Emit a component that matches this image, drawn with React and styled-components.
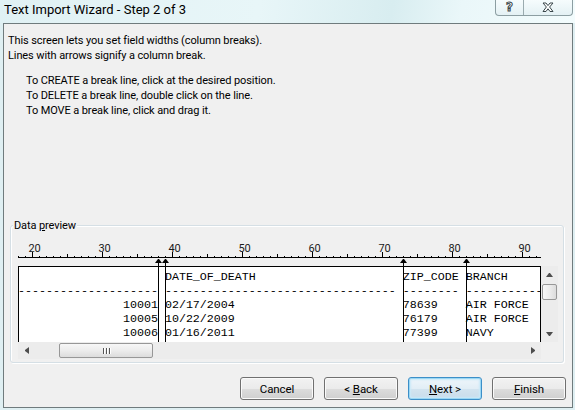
import styled, { createGlobalStyle } from "styled-components";

const UI_FONT = `Roboto, "Noto Sans", sans-serif`;
const MONO = `"Liberation Mono", "Courier New", monospace`;

// one character of the preview is 7px wide; the view is scrolled so col 18 sits at the pane's left edge
const CHAR = 7;
const FIRST_COL = 18;
const colX = (c) => (c - FIRST_COL) * CHAR;

const BREAKS = [38, 39, 73, 82];

const row = (id, date, zip, branch) =>
  id.padStart(38) + " " + date.padEnd(34) + zip.padEnd(9) + branch;

const LINES = [
  " ".repeat(39) + "DATE_OF_DEATH".padEnd(34) + "ZIP_CODE".padEnd(9) + "BRANCH",
  "-".repeat(38) + " " + "-".repeat(33) + " " + "-".repeat(8) + " " + "-".repeat(11),
  row("10001", "02/17/2004", "78639", "AIR FORCE"),
  row("10005", "10/22/2009", "76179", "AIR FORCE"),
  row("10006", "01/16/2011", "77399", "NAVY"),
].map((l) => l.slice(FIRST_COL));

const GlobalStyle = createGlobalStyle`
  html, body { margin: 0; padding: 0; }
  body {
    background: #e2f1f4;
    font-family: ${UI_FONT};
    font-size: 11px;
    letter-spacing: -0.1px;
    color: #000;
  }
`;

const Window = styled.div`
  width: 575px;
  height: 410px;
  display: flex;
  flex-direction: column;
  overflow: hidden;
  background: #dfeff2;
`;

const TitleBar = styled.div`
  height: 23px;
  flex-shrink: 0;
  display: flex;
  justify-content: space-between;
  align-items: flex-start;
  padding-left: 4px;
  background: linear-gradient(100deg, #e0f1f4 0%, #e8f6f8 45%, #d8edf0 68%, #eaf7f9 80%, #f3fcfd 100%);
`;

const Title = styled.div`
  line-height: 20px;
  font-size: 13px;
  letter-spacing: 0;
`;

const CaptionGroup = styled.div`
  display: flex;
  margin-right: 2px;
  height: 15px;
  border: 1px solid #8c9ea2;
  border-top: none;
  border-radius: 0 0 4px 4px;
  overflow: hidden;
  background: linear-gradient(180deg, #f6fcfd 0%, #e4f1f4 100%);
`;

const CaptionButton = styled.div`
  width: ${(p) => p.$w}px;
  display: flex;
  align-items: center;
  justify-content: center;
  & + & { border-left: 1px solid #9aabaf; }
`;

const HelpGlyph = styled.span`
  font-family: "DejaVu Sans", sans-serif;
  font-weight: bold;
  font-size: 12px;
  line-height: 12px;
  margin-top: -2px;
  color: #fff;
  -webkit-text-stroke: 1px #3a474b;
`;

const Client = styled.div`
  flex: 1;
  margin: 0 2px 2px 3px;
  border: 1px solid #6f7b7d;
  background: #f0f0f0;
  display: flex;
  flex-direction: column;
`;

const Intro = styled.div`
  height: 201px;
  padding: 9px 0 0 4px;
  box-sizing: border-box;
`;

const Para = styled.p`
  margin: 0;
  line-height: 15px;
  padding-left: ${(p) => (p.$indent ? 18 : 0)}px;
  & + & { margin-top: 10px; }
`;

const GroupBox = styled.div`
  position: relative;
  height: 138px;
  box-sizing: border-box;
  margin: 0 8px 0 6px;
  padding: 0 5px 0 7px;
  border: 1px solid #d5dfe5;
  border-radius: 3px;
  box-shadow: inset 1px 1px 0 #fff, 1px 1px 0 #fff;
`;

const Legend = styled.span`
  position: absolute;
  left: 2px;
  top: -8px;
  padding: 0 1px;
  line-height: 15px;
  background: #f0f0f0;
`;

const RulerSvg = styled.svg`
  display: block;
  width: 523px;
  height: 40px;
`;

const PreviewGrid = styled.div`
  display: grid;
  grid-template-columns: 523px 17px;
  grid-template-rows: 76px 17px;
`;

const Pane = styled.div`
  border: 1px solid #000;
  border-bottom: none;
  background: #fff;
  overflow: hidden;
  padding-top: 3px;
`;

const DataLine = styled.div`
  margin-left: -1px;
  white-space: pre;
  font-family: ${MONO};
  font-size: 11.66px;
  letter-spacing: 0;
  line-height: 14px;
  color: #000;
`;

const Track = styled.div`
  background: #ececec;
  display: flex;
  flex-direction: ${(p) => (p.$vertical ? "column" : "row")};
`;

const ArrowCell = styled.div`
  flex: 0 0 17px;
  display: flex;
  align-items: center;
  justify-content: center;
`;

const Spacer = styled.div`
  flex: 1;
`;

const ArrowUp = styled.div`
  width: 1px;
  border-left: 3px solid transparent;
  border-right: 3px solid transparent;
  border-${(p) => (p.$down ? "top" : "bottom")}: 4px solid #4d4d4d;
`;

const ArrowSide = styled.div`
  height: 1px;
  border-top: 3px solid transparent;
  border-bottom: 3px solid transparent;
  border-${(p) => (p.$right ? "left" : "right")}: 4px solid #4d4d4d;
`;

const VThumb = styled.div`
  margin: 1px 1px 0;
  height: 16px;
  box-sizing: border-box;
  border: 1px solid #979797;
  border-radius: 2px;
  background: linear-gradient(90deg, #f7f7f7 0%, #ececec 50%, #dcdcdc 100%);
`;

const HThumb = styled.div`
  margin: 1px 0 0 24px;
  width: 94px;
  height: 15px;
  box-sizing: border-box;
  border: 1px solid #979797;
  border-radius: 2px;
  background: linear-gradient(180deg, #f7f7f7 0%, #ececec 50%, #dcdcdc 100%);
  display: flex;
  align-items: center;
  justify-content: center;
  gap: 2px;
`;

const Grip = styled.div`
  width: 1px;
  height: 6px;
  background: #555;
  box-shadow: 1px 0 0 #fff;
`;

const Corner = styled.div`
  background: #f0f0f0;
`;

const Marker = styled.div`
  position: absolute;
  left: ${(p) => p.$x}px;
  top: 33px;
  width: 7px;
  height: 83px;
  display: flex;
  flex-direction: column;
  align-items: center;
`;

const MarkerHead = styled.div`
  width: 1px;
  border-left: 3px solid transparent;
  border-right: 3px solid transparent;
  border-bottom: 4px solid #000;
`;

const MarkerLine = styled.div`
  flex: 1;
  width: 1px;
  background: #000;
`;

const ButtonRow = styled.div`
  display: flex;
  justify-content: flex-end;
  gap: 10px;
  margin-top: 14px;
  padding-right: 6px;
`;

const Button = styled.button`
  width: 74px;
  height: 23px;
  padding: 0;
  font-family: ${UI_FONT};
  font-size: 11.5px;
  letter-spacing: -0.1px;
  color: #000;
  border-radius: 3px;
  border: 1px solid ${(p) => (p.$default ? "#3c8fc8" : "#707070")};
  background: ${(p) =>
    p.$default
      ? "linear-gradient(180deg, #eef6fb 0%, #e2eef6 50%, #d3e4ef 51%, #c8dcea 100%)"
      : "linear-gradient(180deg, #f2f2f2 0%, #ebebeb 50%, #dddddd 51%, #cfcfcf 100%)"};
  box-shadow: ${(p) =>
    p.$default ? "inset 0 0 0 1px #9ad7f4, inset 0 0 2px 2px #cbe9f8" : "inset 0 0 0 1px #fafafa"};
`;

function Ruler() {
  const ticks = [];
  const labels = [];
  for (let c = FIRST_COL; c <= 92; c++) {
    const x = colX(c);
    const h = c % 10 === 0 ? 5 : c % 5 === 0 ? 3 : 1;
    ticks.push(<rect key={c} x={x} y={31 - h} width="1" height={h} fill="#000" />);
    if (c % 10 === 0) {
      labels.push(
        <text
          key={"l" + c}
          x={x + 2.5}
          y="25.5"
          textAnchor="middle"
          fontFamily={UI_FONT}
          fontSize="11"
          fill="#1a1a1a"
        >
          {c}
        </text>
      );
    }
  }
  return (
    <RulerSvg viewBox="0 0 523 40">
      {labels}
      {ticks}
      <rect x="0" y="31" width="523" height="1" fill="#000" />
    </RulerSvg>
  );
}

function CloseGlyph() {
  return (
    <svg width="12" height="11" viewBox="0 0 12 11">
      <path
        d="M1 1h3l2 2.6L8 1h3L7.6 5 11 9.5H8L6 6.8 4 9.5H1L4.4 5z"
        fill="#fff"
        stroke="#3a474b"
        strokeWidth="1"
        strokeLinejoin="round"
      />
    </svg>
  );
}

export default function App() {
  return (
    <>
      <GlobalStyle />
      <Window>
        <TitleBar>
          <Title>Text Import Wizard - Step 2 of 3</Title>
          <CaptionGroup>
            <CaptionButton $w={27}>
              <HelpGlyph>?</HelpGlyph>
            </CaptionButton>
            <CaptionButton $w={48}>
              <CloseGlyph />
            </CaptionButton>
          </CaptionGroup>
        </TitleBar>

        <Client>
          <Intro>
            <Para>
              This screen lets you set field widths (column breaks).
              <br />
              Lines with arrows signify a column break.
            </Para>
            <Para $indent>
              To CREATE a break line, click at the desired position.
              <br />
              To DELETE a break line, double click on the line.
              <br />
              To MOVE a break line, click and drag it.
            </Para>
          </Intro>

          <GroupBox>
            <Legend>
              Data <u>p</u>review
            </Legend>
            <Ruler />
            <PreviewGrid>
              <Pane>
                {LINES.map((line, i) => (
                  <DataLine key={i}>{line}</DataLine>
                ))}
              </Pane>
              <Track $vertical>
                <ArrowCell>
                  <ArrowUp />
                </ArrowCell>
                <VThumb />
                <Spacer />
                <ArrowCell>
                  <ArrowUp $down />
                </ArrowCell>
              </Track>
              <Track>
                <ArrowCell>
                  <ArrowSide />
                </ArrowCell>
                <HThumb>
                  <Grip />
                  <Grip />
                  <Grip />
                </HThumb>
                <Spacer />
                <ArrowCell>
                  <ArrowSide $right />
                </ArrowCell>
              </Track>
              <Corner />
            </PreviewGrid>
            {BREAKS.map((c) => (
              <Marker key={c} $x={7 + colX(c) - 3}>
                <MarkerHead />
                <MarkerLine />
              </Marker>
            ))}
          </GroupBox>

          <ButtonRow>
            <Button>Cancel</Button>
            <Button>
              &lt; <u>B</u>ack
            </Button>
            <Button $default>
              <u>N</u>ext &gt;
            </Button>
            <Button>
              <u>F</u>inish
            </Button>
          </ButtonRow>
        </Client>
      </Window>
    </>
  );
}
